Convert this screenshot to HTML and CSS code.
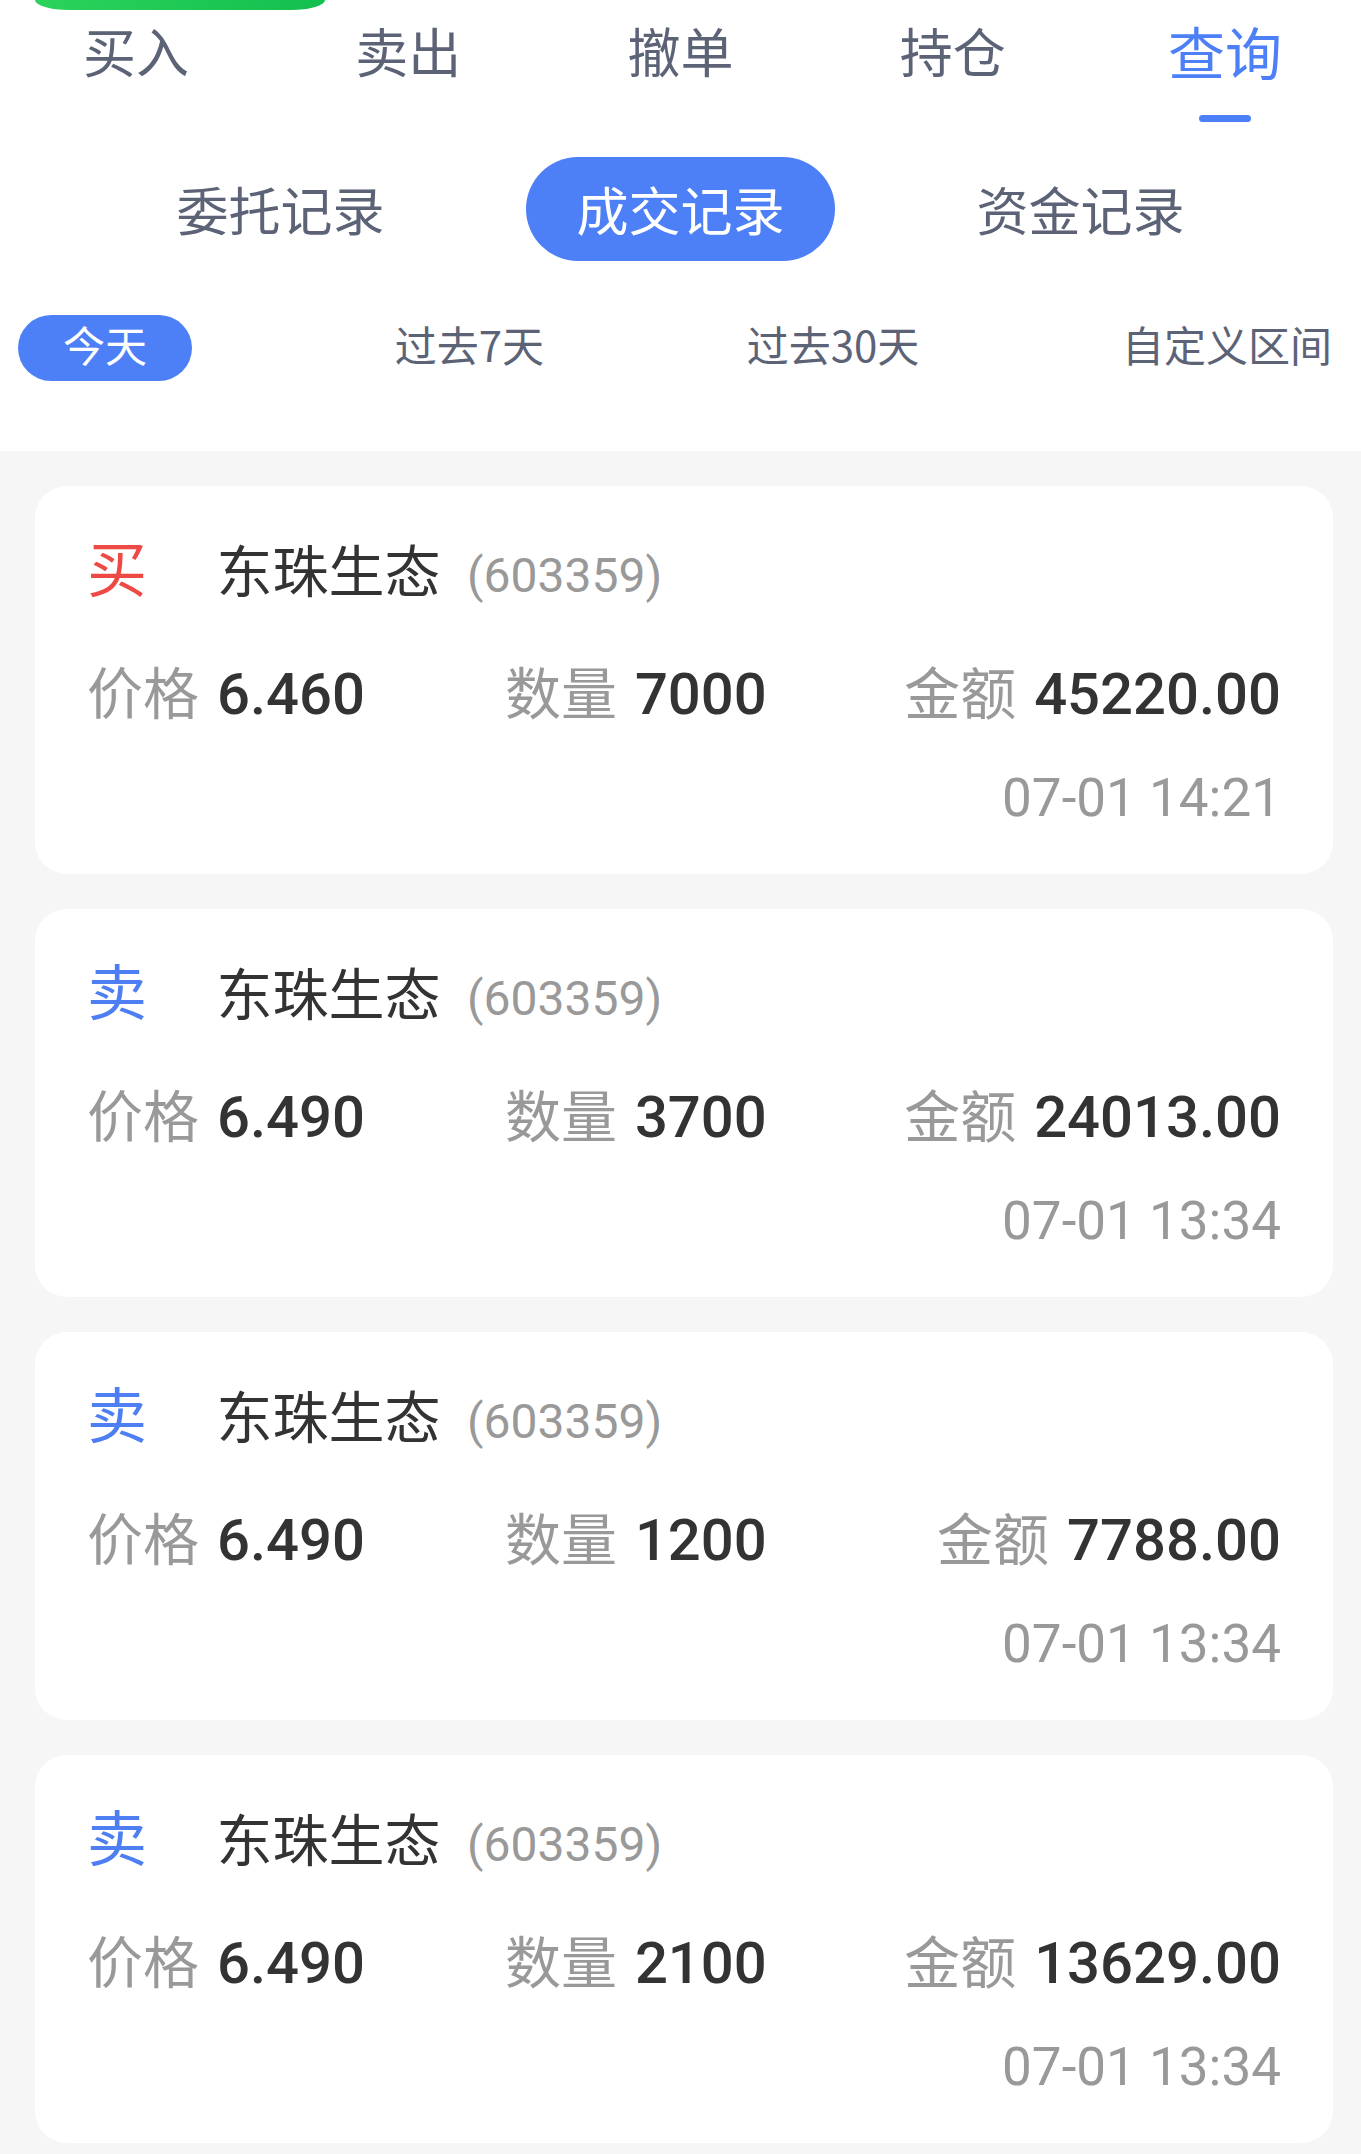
FILE: index.html
```html
<!DOCTYPE html>
<html lang="zh-CN">
<head>
    <meta charset="UTF-8">
    <meta name="viewport" content="width=device-width, initial-scale=1.0">
    <title>查询 - 成交记录</title>
    <link rel="stylesheet" href="styles.css">
</head>
<body>
    <header class="top">
        <div class="brand-bar"></div>
        <nav class="tabs">
            <span class="tab">买入</span>
            <span class="tab">卖出</span>
            <span class="tab">撤单</span>
            <span class="tab">持仓</span>
            <span class="tab active">查询</span>
        </nav>
        <div class="subtabs">
            <span class="subtab">委托记录</span>
            <span class="subtab active">成交记录</span>
            <span class="subtab">资金记录</span>
        </div>
        <div class="ranges">
            <span class="range active">今天</span>
            <span class="range">过去7天</span>
            <span class="range">过去30天</span>
            <span class="range">自定义区间</span>
        </div>
    </header>

    <main class="list">
        <div class="card">
            <div class="card-head">
                <span class="side buy">买</span>
                <span class="name">东珠生态</span>
                <span class="code">(603359)</span>
            </div>
            <div class="card-nums">
                <div><span class="label">价格</span><span class="num">6.460</span></div>
                <div><span class="label">数量</span><span class="num">7000</span></div>
                <div class="right"><span class="label">金额</span><span class="num">45220.00</span></div>
            </div>
            <div class="time">07-01 14:21</div>
        </div>

        <div class="card">
            <div class="card-head">
                <span class="side sell">卖</span>
                <span class="name">东珠生态</span>
                <span class="code">(603359)</span>
            </div>
            <div class="card-nums">
                <div><span class="label">价格</span><span class="num">6.490</span></div>
                <div><span class="label">数量</span><span class="num">3700</span></div>
                <div class="right"><span class="label">金额</span><span class="num">24013.00</span></div>
            </div>
            <div class="time">07-01 13:34</div>
        </div>

        <div class="card">
            <div class="card-head">
                <span class="side sell">卖</span>
                <span class="name">东珠生态</span>
                <span class="code">(603359)</span>
            </div>
            <div class="card-nums">
                <div><span class="label">价格</span><span class="num">6.490</span></div>
                <div><span class="label">数量</span><span class="num">1200</span></div>
                <div class="right"><span class="label">金额</span><span class="num">7788.00</span></div>
            </div>
            <div class="time">07-01 13:34</div>
        </div>

        <div class="card">
            <div class="card-head">
                <span class="side sell">卖</span>
                <span class="name">东珠生态</span>
                <span class="code">(603359)</span>
            </div>
            <div class="card-nums">
                <div><span class="label">价格</span><span class="num">6.490</span></div>
                <div><span class="label">数量</span><span class="num">2100</span></div>
                <div class="right"><span class="label">金额</span><span class="num">13629.00</span></div>
            </div>
            <div class="time">07-01 13:34</div>
        </div>
    </main>
</body>
</html>
```

FILE: styles.css
```css
body {
    margin: 0;
    padding: 0;
    background-color: #f6f6f6;
    font-family: "Noto Sans CJK SC", sans-serif;
    color: #333;
}
.top {
    background-color: white;
    padding-bottom: 70px;
}
.brand-bar {
    width: 290px;
    height: 10px;
    margin-left: 35px;
    border-radius: 0 0 34px 34px / 0 0 10px 10px;
    background: linear-gradient(90deg, #2bd35b, #13bf4f);
}
.tabs {
    display: flex;
    margin-top: 5px;
}
.tab {
    flex: 1;
    text-align: center;
    font-size: 53px;
    line-height: 70px;
    color: #5c6377;
}
.tab.active {
    font-size: 57px;
    color: #4d80f7;
}
.tab.active::after {
    content: "";
    display: block;
    width: 52px;
    height: 7px;
    margin: 30px auto 0;
    border-radius: 4px;
    background-color: #4d80f7;
}
.subtabs {
    display: grid;
    grid-template-columns: repeat(3, 1fr);
    justify-items: center;
    width: 1200px;
    margin: 35px auto 0;
}
.subtab {
    padding: 0 50px;
    font-size: 52px;
    line-height: 104px;
    border-radius: 52px;
    color: #5c6377;
}
.subtab.active {
    background-color: #4d80f7;
    color: white;
}
.ranges {
    display: flex;
    justify-content: space-between;
    padding: 0 29px 0 18px;
    margin-top: 54px;
}
.range {
    font-size: 42px;
    line-height: 58px;
    padding-bottom: 8px;
    color: #5c6377;
}
.range.active {
    padding: 0 45px 8px;
    border-radius: 33px;
    background-color: #4d80f7;
    color: white;
}
.list {
    padding: 35px 28px 10px 35px;
}
.card {
    background-color: white;
    border-radius: 32px;
    padding: 42px 52px 36px;
    margin-bottom: 35px;
}
.card-head {
    font-size: 56px;
    line-height: 80px;
    white-space: nowrap;
}
.side {
    display: inline-block;
    width: 117px;
    font-size: 60px;
    line-height: 1;
}
.buy {
    color: #ee4a45;
}
.sell {
    color: #4d7ef2;
}
.name {
    color: #333;
}
.code {
    margin-left: 14px;
    font-family: Roboto, sans-serif;
    font-size: 48px;
    line-height: 1;
    color: #999;
}
.card-nums {
    display: grid;
    grid-template-columns: 35% 1fr auto;
    margin-top: 42px;
    font-size: 56px;
    line-height: 80px;
    white-space: nowrap;
}
.label {
    color: #999;
}
.num {
    margin-left: 18px;
    font-family: Roboto, sans-serif;
    font-size: 58px;
    font-weight: 500;
    line-height: 1;
    color: #333;
}
.right {
    text-align: right;
}
.time {
    margin-top: 28px;
    text-align: right;
    font-family: Roboto, sans-serif;
    font-size: 53px;
    line-height: 80px;
    color: #999;
}
```
